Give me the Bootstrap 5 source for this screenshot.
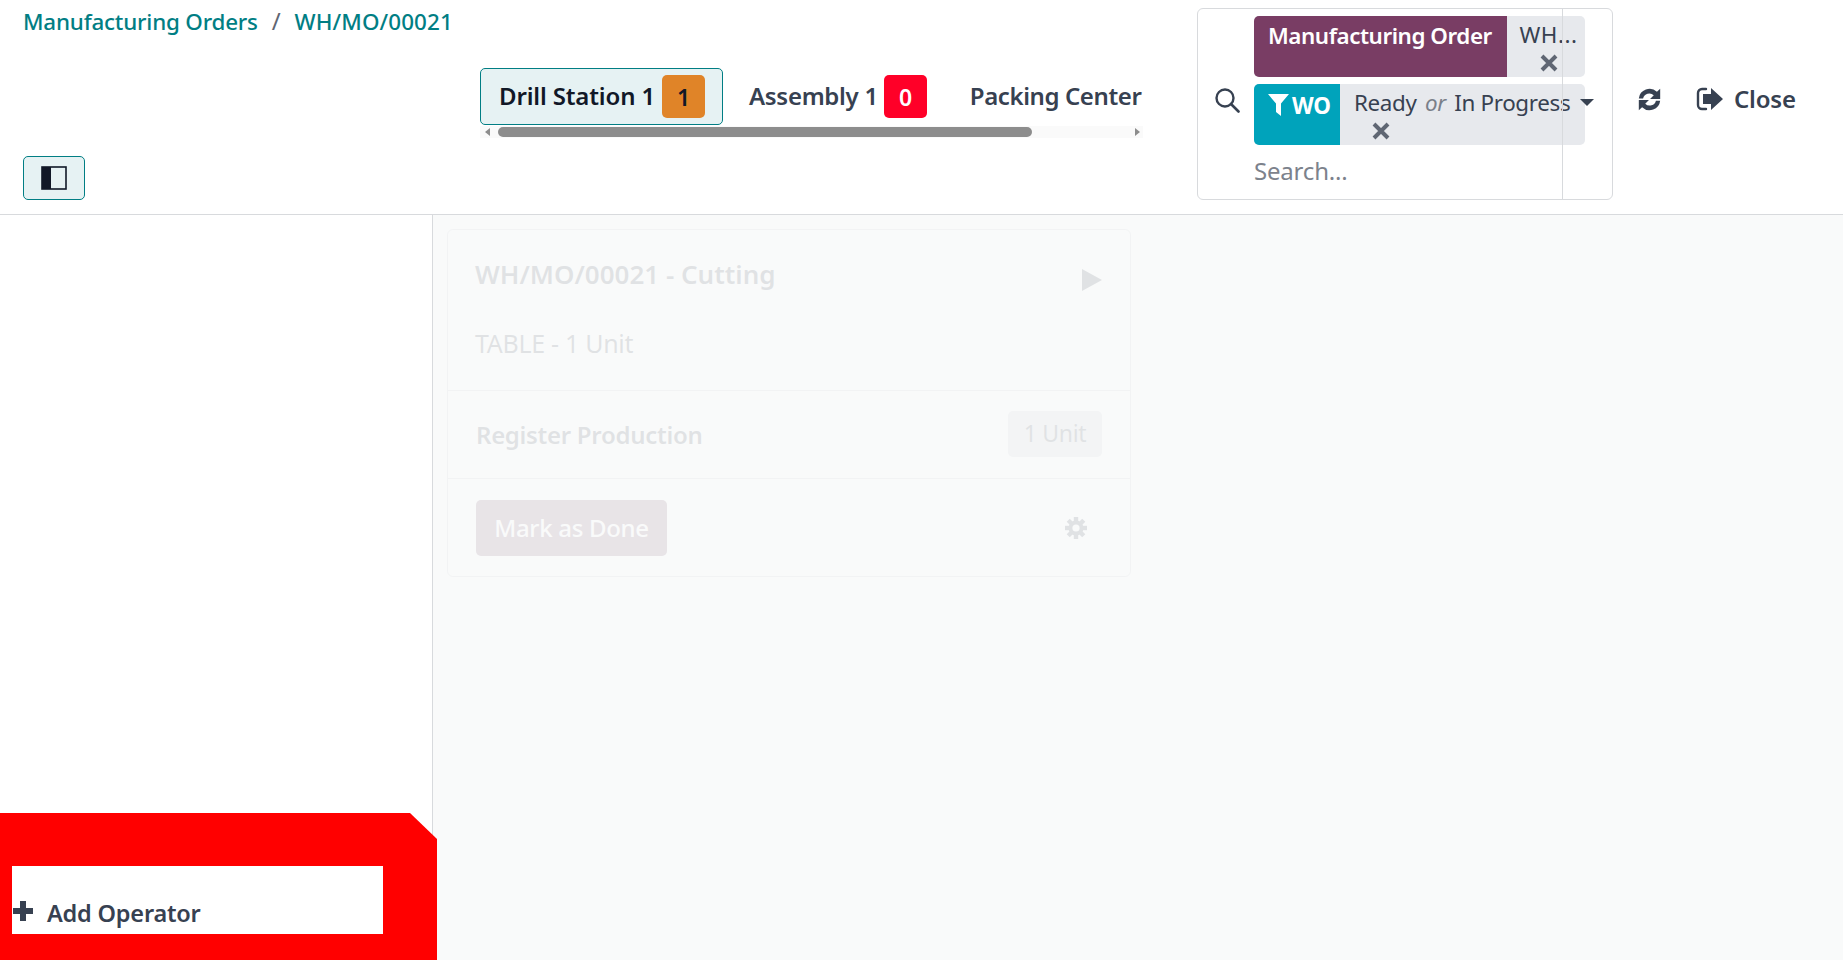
<!DOCTYPE html>
<html lang="en">
<head>
    <meta charset="UTF-8">
    <meta name="viewport" content="width=device-width, initial-scale=1.0">
    <title>Work Orders</title>
    <link href="https://cdn.jsdelivr.net/npm/bootstrap@5.3.0/dist/css/bootstrap.min.css" rel="stylesheet">
    <style>
        html, body { height: 100%; }
        body { font-family: "Noto Sans", "Open Sans", sans-serif; font-size: 23px; color: #374151; background: #fff; overflow: hidden; }
        .app-shell { height: 960px; }
        .top-head { height: 215px; border-bottom: 1px solid #d8dadd; }
        .left-zone { width: 480px; padding: 6px 0 14px 23px; }
        .crumbs { color: #017e84; font-size: 22.4px; font-weight: 500; line-height: 30px; letter-spacing: -.2px; }
        .crumbs .sep { color: #5f6673; font-weight: 400; font-size: 24px; margin: 0 14px; }
        .crumbs .cur { letter-spacing: .1px; }
        .toggle-btn { width: 62px; height: 44px; padding: 0; background: #e6f2f3; border: 1px solid #017e84; border-radius: 5px; }
        .tabs-zone { width: 663px; padding-top: 68px; }
        .tab-strip { height: 57px; overflow: hidden; white-space: nowrap; }
        .wc-tab { height: 57px; font-weight: 600; font-size: 24px; letter-spacing: -.3px; line-height: 30px; border: 1px solid transparent; border-radius: 5px; padding: 0 18px; }
        .wc-tab.on { width: 243px; flex: none; background: #e6f2f3; border-color: #017e84; color: #111827; letter-spacing: -.15px; padding-right: 17px; }
        .wc-tab.plain { padding: 0 0 0 25px; }
        .wc-tab.last { padding-left: 41px; flex: none; letter-spacing: -.4px; }
        .tab-name { margin-top: -1px; }
        .count { width: 43px; height: 43px; border-radius: 5px; font-size: 23px; margin-left: 6px; }
        .count.orange { background: #e08428; color: #111827; }
        .count.red { background: #ff0028; color: #fff; }
        .fake-scroll { height: 12px; margin-top: 1px; background: #fafafa; }
        .fake-scroll .thumb { width: 534px; height: 10px; background: #8d8d8d; border-radius: 5px; margin-left: 8px; }
        .arrow-l, .arrow-r { width: 0; height: 0; border-top: 4px solid transparent; border-bottom: 4px solid transparent; }
        .arrow-l { border-right: 5px solid #8d8d8d; margin-left: 5px; }
        .arrow-r { border-left: 5px solid #8d8d8d; margin-left: auto; margin-right: 3px; }
        .search-zone { width: 416px; height: 192px; margin: 8px 0 0 54px; border: 1px solid #d8dadd; border-radius: 6px; padding: 7px 0 0 16px; }
        .search-line { position: absolute; top: 0; bottom: 0; left: 364px; width: 1px; background: #d8dadd; }
        .search-glass { width: 26px; height: 26px; margin-right: 14px; }
        .facet-stack { width: 331px; }
        .facet { border-radius: 5px; overflow: hidden; background: #e7e9ed; min-height: 61px; margin-bottom: 7px; }
        .facet-label { color: #fff; font-weight: 600; font-size: 22.4px; line-height: 40px; letter-spacing: -.3px; }
        .facet-label.mo { width: 253px; background: #793d64; padding-left: 14px; letter-spacing: -.45px; }
        .facet-label.wo { width: 86px; background: #00a3bb; padding: 2px 0 0 14px; font-weight: 700; }
        .facet-val { font-size: 22.4px; line-height: 34px; text-align: center; letter-spacing: -.3px; padding-top: 2px; }
        .facet-val em { color: #7a8089; margin: 0 3px; }
        .val-wh { width: 78px; letter-spacing: .5px; padding-left: 5px; }
        .val-ready { width: 245px; text-align: left; padding-left: 14px; letter-spacing: -.35px; }
        .x-mark { width: 22px; height: 22px; display: block; }
        .x-left { margin-left: 16px; }
        .search-input { font-size: 24px; color: #7c828c; line-height: 30px; margin-top: 11px; letter-spacing: -.2px; }
        .caret-dn { position: absolute; left: 382px; top: 90px; width: 0; height: 0; border-left: 7px solid transparent; border-right: 7px solid transparent; border-top: 7px solid #374151; }
        .act-zone { padding: 80px 0 0 0; }
        .act-refresh { width: 27px; height: 27px; margin: 6px 0 0 23px; }
        .act-close { margin-left: 33px; font-weight: 600; font-size: 24px; line-height: 38px; letter-spacing: -.2px; }
        .act-close svg { width: 28px; height: 26px; margin-right: 10px; }
        .side-pane { width: 433px; flex: none; border-right: 1px solid #d8dadd; }
        .red-foot { height: 147px; margin-right: -5px; background: #f00; clip-path: polygon(0 0, 410px 0, 100% 26px, 100% 100%, 0 100%); padding: 53px 54px 26px 12px; z-index: 1; }
        .op-box { height: 68px; background: #fff; padding: 0 0 6px 0; font-weight: 600; font-size: 23.5px; line-height: 30px; letter-spacing: -.2px; }
        .op-box svg { width: 20px; height: 20px; margin: 0 14px 7px 1px; }
        .main-pane { background: #f9fafa; padding: 14px 0 0 14px; }
        .wo-card { width: 684px; height: 348px; background: #fff; border: 1px solid #c4c8ce; border-radius: 6px; opacity: .12; }
        .wo-top { height: 161px; padding: 27px 28px 0 27px; border-bottom: 1px solid #c4c8ce; }
        .wo-title { font-size: 26px; font-weight: 600; line-height: 34px; letter-spacing: 0; }
        .wo-sub { font-size: 25px; line-height: 30px; margin-top: 37px; letter-spacing: -.3px; }
        .wo-play { width: 20px; height: 22px; margin-top: 12px; }
        .wo-step { height: 88px; padding: 0 28px 0 28px; border-bottom: 1px solid #c4c8ce; font-weight: 600; font-size: 24px; letter-spacing: -.3px; }
        .unit-pill { width: 94px; height: 46px; background: #c9ccd3; border-radius: 5px; font-weight: 400; font-size: 23px; margin-bottom: 2px; }
        .wo-foot { padding: 21px 43px 0 28px; }
        .done-btn { width: 191px; height: 56px; background: #714b67; color: #fff; border: 0; border-radius: 5px; font-size: 24px; letter-spacing: -.3px; font-weight: 500; padding: 0; }
        .wo-gear { width: 22px; height: 22px; }
    </style>
</head>
<body>
    <div class="app-shell d-flex flex-column">
        <header class="top-head d-flex flex-shrink-0">
            <div class="left-zone d-flex flex-column justify-content-between align-items-start flex-shrink-0">
                <div class="crumbs">Manufacturing Orders<span class="sep">/</span><span class="cur">WH/MO/00021</span></div>
                <button class="toggle-btn d-flex align-items-center justify-content-center" aria-label="Toggle panel">
                    <svg width="26" height="24" viewBox="0 0 26 24"><rect x="1" y="1" width="24" height="22" fill="#e6f2f3" stroke="#111827" stroke-width="1.6"/><rect x="1" y="1" width="9" height="22" fill="#111827"/></svg>
                </button>
            </div>

            <div class="tabs-zone flex-shrink-0">
                <div class="tab-strip d-flex">
                    <div class="wc-tab on d-flex align-items-center justify-content-between"><span class="tab-name">Drill Station 1</span> <span class="count orange d-flex align-items-center justify-content-center">1</span></div>
                    <div class="wc-tab plain d-flex align-items-center"><span class="tab-name">Assembly 1</span> <span class="count red d-flex align-items-center justify-content-center">0</span></div>
                    <div class="wc-tab plain last d-flex align-items-center"><span class="tab-name">Packing Center</span></div>
                </div>
                <div class="fake-scroll d-flex align-items-center">
                    <span class="arrow-l"></span><span class="thumb"></span><span class="arrow-r"></span>
                </div>
            </div>

            <div class="search-zone d-flex position-relative flex-shrink-0">
                <span class="search-line"></span>
                <svg class="search-glass align-self-center" viewBox="0 0 26 26" style="margin-top:-16px"><circle cx="11" cy="11" r="8.5" fill="none" stroke="#374151" stroke-width="2.4"/><path d="M17 17l7.5 7.5" stroke="#374151" stroke-width="2.6" stroke-linecap="round"/></svg>
                <div class="facet-stack">
                    <div class="facet d-flex">
                        <div class="facet-label mo">Manufacturing Order</div>
                        <div class="facet-val val-wh d-flex flex-column align-items-center">WH...
                            <svg class="x-mark" viewBox="0 0 22 22"><path d="M4 4l14 14M18 4L4 18" stroke="#5f6673" stroke-width="4"/></svg>
                        </div>
                    </div>
                    <div class="facet d-flex">
                        <div class="facet-label wo d-flex align-items-start"><svg width="21" height="22" viewBox="0 0 21 22" style="margin:8px 3px 0 0"><path d="M0 0h21l-8 9.5V22l-5-4v-8.5z" fill="#fff"/></svg>WO</div>
                        <div class="facet-val val-ready"><div>Ready <em>or</em> In Progress</div>
                            <svg class="x-mark x-left" viewBox="0 0 22 22"><path d="M4 4l14 14M18 4L4 18" stroke="#5f6673" stroke-width="4"/></svg>
                        </div>
                    </div>
                    <div class="search-input">Search...</div>
                </div>
                <span class="caret-dn"></span>
            </div>

            <div class="act-zone d-flex align-items-start">
                <svg class="act-refresh" viewBox="0 0 24 24"><path d="M2.5 11A9.6 9.6 0 0 1 18.6 5.2L21.5 2.500v9h-9l3.300-3.300A5.700 5.700 0 0 0 6.300 11zM21.500 13A9.600 9.600 0 0 1 5.400 18.800L2.500 21.500v-9h9l-3.300 3.300A5.700 5.700 0 0 0 17.700 13z" fill="#374151"/></svg>
                <div class="act-close d-flex align-items-center">
                    <svg viewBox="0 0 28 26"><path d="M10 3H6a4 4 0 0 0-4 4v12a4 4 0 0 0 4 4h4" fill="none" stroke="#374151" stroke-width="2.4" stroke-linecap="round"/><path d="M15 2l12 11-12 11v-6H7V8h8z" fill="#374151"/></svg>
                    Close
                </div>
            </div>
        </header>

        <div class="d-flex flex-grow-1">
            <aside class="side-pane d-flex flex-column justify-content-end">
                <div class="red-foot position-relative">
                    <div class="op-box d-flex align-items-end">
                        <svg viewBox="0 0 20 20"><path d="M7 0h6v7h7v6h-7v7H7v-7H0V7h7z" fill="#374151"/></svg>Add Operator
                    </div>
                </div>
            </aside>
            <main class="main-pane flex-grow-1">
                <div class="wo-card">
                    <div class="wo-top">
                        <div class="d-flex justify-content-between">
                            <div class="wo-title">WH/MO/00021 - Cutting</div>
                            <svg class="wo-play" viewBox="0 0 20 22"><path d="M0 0l20 11L0 22z" fill="#374151"/></svg>
                        </div>
                        <div class="wo-sub">TABLE - 1 Unit</div>
                    </div>
                    <div class="wo-step d-flex align-items-center justify-content-between">
                        <span>Register Production</span>
                        <span class="unit-pill d-flex align-items-center justify-content-center">1 Unit</span>
                    </div>
                    <div class="wo-foot d-flex align-items-center justify-content-between">
                        <button class="done-btn">Mark as Done</button>
                        <svg class="wo-gear" viewBox="-11 -11 22 22"><g fill="#374151"><circle r="7.5"/><rect x="-2.2" y="-11" width="4.4" height="22"/><rect x="-2.2" y="-11" width="4.4" height="22" transform="rotate(45)"/><rect x="-2.2" y="-11" width="4.4" height="22" transform="rotate(90)"/><rect x="-2.2" y="-11" width="4.4" height="22" transform="rotate(135)"/></g><circle r="3.6" fill="#fff"/></svg>
                    </div>
                </div>
            </main>
        </div>
    </div>
    <script src="https://cdn.jsdelivr.net/npm/bootstrap@5.3.0/dist/js/bootstrap.bundle.min.js"></script>
</body>
</html>
